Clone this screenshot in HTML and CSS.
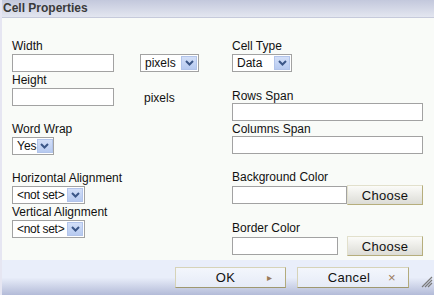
FILE: index.html
```html
<!DOCTYPE html>
<html>
<head>
  <title>Cell Properties</title>
  <link rel="stylesheet" href="styles.css">
</head>
<body>
  <div class="dialog">
    <div class="titlebar">Cell Properties</div>

    <div class="content">
      <!-- left column -->
      <div class="col">
        <div class="field">
          <label>Width</label>
          <div class="row">
            <input type="text" class="text w-size">
            <div class="select sel-unit"><span>pixels</span><span class="arrow"><svg width="9" height="6" viewBox="0 0 9 6"><path d="M1 1 L4.5 4.5 L8 1" fill="none" stroke="#3b5687" stroke-width="2"/></svg></span></div>
          </div>
        </div>
        <div class="field f-height">
          <label>Height</label>
          <div class="row">
            <input type="text" class="text w-size">
            <span class="unit">pixels</span>
          </div>
        </div>
        <div class="field f-wrap">
          <label>Word Wrap</label>
          <div class="select sel-yes"><span>Yes</span><span class="arrow"><svg width="9" height="6" viewBox="0 0 9 6"><path d="M1 1 L4.5 4.5 L8 1" fill="none" stroke="#3b5687" stroke-width="2"/></svg></span></div>
        </div>
        <div class="field f-halign">
          <label>Horizontal Alignment</label>
          <div class="select sel-align"><span>&lt;not set&gt;</span><span class="arrow"><svg width="9" height="6" viewBox="0 0 9 6"><path d="M1 1 L4.5 4.5 L8 1" fill="none" stroke="#3b5687" stroke-width="2"/></svg></span></div>
        </div>
        <div class="field f-valign">
          <label>Vertical Alignment</label>
          <div class="select sel-align"><span>&lt;not set&gt;</span><span class="arrow"><svg width="9" height="6" viewBox="0 0 9 6"><path d="M1 1 L4.5 4.5 L8 1" fill="none" stroke="#3b5687" stroke-width="2"/></svg></span></div>
        </div>
      </div>

      <!-- right column -->
      <div class="col">
        <div class="field">
          <label>Cell Type</label>
          <div class="select sel-type"><span>Data</span><span class="arrow"><svg width="9" height="6" viewBox="0 0 9 6"><path d="M1 1 L4.5 4.5 L8 1" fill="none" stroke="#3b5687" stroke-width="2"/></svg></span></div>
        </div>
        <div class="field f-rows">
          <label class="tight">Rows Span</label>
          <input type="text" class="text w-full">
        </div>
        <div class="field f-cols">
          <label class="tight">Columns Span</label>
          <input type="text" class="text w-full">
        </div>
        <div class="field f-bg">
          <label>Background Color</label>
          <div class="row">
            <input type="text" class="text w-bg">
            <button class="choose">Choose</button>
          </div>
        </div>
        <div class="field f-border">
          <label>Border Color</label>
          <div class="row">
            <input type="text" class="text w-border">
            <button class="choose">Choose</button>
          </div>
        </div>
      </div>
    </div>

    <div class="footer">
      <button class="btn btn-ok">OK <span class="icon ok-icon">&#9656;</span></button>
      <button class="btn btn-cancel">Cancel <span class="icon cancel-icon">&times;</span></button>
      <svg class="grip" width="12" height="12" viewBox="0 0 12 12">
        <path d="M11 1 L1 11 M11 4 L4 11 M11 7 L7 11" stroke="#7a7a7a" stroke-width="1.2"/>
      </svg>
    </div>
  </div>
</body>
</html>
```

FILE: styles.css
```css
body {
  margin: 0;
  padding: 0;
  font-family: "Liberation Sans", Arial, sans-serif;
  font-size: 12px;
  color: #111;
}

.dialog {
  width: 434px;
  height: 295px;
  display: flex;
  flex-direction: column;
  background: #f9fbf8;
  border-left: 2px solid #e6e6f2;
  box-sizing: border-box;
  overflow: hidden;
}

.titlebar {
  height: 17px;
  line-height: 16px;
  padding-left: 1px;
  font-weight: bold;
  color: #3a3a3a;
  background: linear-gradient(#c3c8dc, #e3e6f0);
  border-bottom: 1px solid #c6cadb;
}

.content {
  flex: 1;
  display: grid;
  grid-template-columns: 220px 1fr;
  padding: 21px 0 0 10px;
}

.field label {
  display: block;
  height: 14px;
  line-height: 14px;
  margin-bottom: 1px;
}

.field label.tight {
  margin-bottom: 0;
}

.row {
  display: flex;
  align-items: center;
}

.f-height { margin-top: 1px; }
.f-wrap { margin-top: 16px; }
.f-halign { margin-top: 16px; }
.f-valign { margin-top: 1px; }
.f-rows { margin-top: 17px; }
.f-cols { margin-top: 1px; }
.f-bg { margin-top: 16px; }
.f-border { margin-top: 16px; }

.text {
  display: block;
  box-sizing: border-box;
  height: 18px;
  margin: 0;
  padding: 0 2px;
  border: 1px solid #a2a2a2;
  background: #fff;
  font: inherit;
  outline: none;
}

.w-size { width: 102px; }
.w-full { width: 191px; }
.w-bg { width: 115px; }
.w-border { width: 106px; margin-right: 9px; }

.unit {
  margin-left: 30px;
  margin-top: 2px;
}

.select {
  box-sizing: border-box;
  height: 18px;
  border: 1px solid #a2a2a2;
  background: #fff;
  display: flex;
  align-items: center;
  justify-content: space-between;
  padding: 0 1px 0 4px;
  white-space: nowrap;
  overflow: hidden;
}

.sel-unit { width: 59px; margin-left: 26px; }
.sel-type { width: 60px; }
.sel-yes { width: 42px; }
.sel-align { width: 73px; padding-left: 4px; letter-spacing: -0.3px; }

.arrow {
  flex-shrink: 0;
  width: 16px;
  height: 14px;
  box-sizing: border-box;
  display: flex;
  align-items: center;
  justify-content: center;
  background: linear-gradient(#d3dff8, #b7caf0);
  border: 1px solid #b2c4ea;
}

.choose {
  box-sizing: border-box;
  width: 76px;
  height: 20px;
  margin: 0;
  padding: 0;
  font: inherit;
  font-size: 13px;
  letter-spacing: 0.3px;
  color: #111;
  background: linear-gradient(#fbfbf8, #dcdcd6);
  border: 1px solid #e2e0cc;
  border-right-color: #b6ae7c;
  border-bottom-color: #b6ae7c;
}

.footer {
  height: 35px;
  display: flex;
  align-items: flex-start;
  padding-top: 7px;
  padding-left: 173px;
  box-sizing: border-box;
  background: linear-gradient(#e9eefa 0, #e9eefa 50%, #b3bbd8 100%);
}

.btn {
  box-sizing: border-box;
  height: 21px;
  margin: 0;
  padding: 0;
  font: inherit;
  font-size: 13px;
  letter-spacing: 0.3px;
  color: #111;
  position: relative;
  background: linear-gradient(#f3f6fc, #e6ebf7);
  border: 1px solid #d6d3b8;
  border-right-color: #b3ab7c;
  border-bottom-color: #9f9870;
}

.btn-ok { width: 111px; padding-right: 10px; }
.btn-cancel { width: 112px; margin-left: 11px; padding-right: 8px; }

.icon {
  position: absolute;
  top: 2px;
  color: #9a7a5a;
}

.ok-icon { right: 13px; font-size: 10px; top: 4px; }
.cancel-icon { right: 12px; font-size: 13px; }

.grip {
  margin-left: 12px;
  margin-top: 9px;
}
```
